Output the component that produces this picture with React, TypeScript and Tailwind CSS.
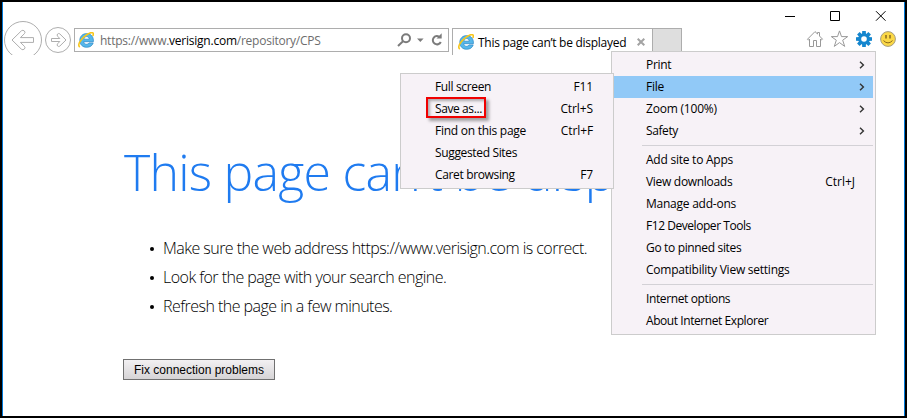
import React from "react";

const UI = "font-['Open_Sans','Noto_Sans',sans-serif]";

function IELogo({ className }: { className: string }) {
  return (
    <svg viewBox="0 0 16 16" className={className} fill="none">
      <path
        d="M8.6 1.6C4.6 1.6 1.8 4.4 1.8 8.4C1.8 12.5 4.6 15.3 8.7 15.3C12 15.3 14.4 13.7 15.2 10.9H11C10.6 11.8 9.8 12.3 8.7 12.3C7 12.3 5.9 11.3 5.8 9.7H15.4C15.8 4.8 13 1.6 8.6 1.6ZM5.9 7.2C6.1 5.6 7.1 4.6 8.6 4.6C10.2 4.6 11.1 5.6 11.2 7.2Z"
        fill="#56b7ea"
        stroke="#2a86c6"
        strokeWidth=".7"
      />
      <path
        d="M1.8 15.2C-.6 13.5 1.6 8.6 6 4.8C10.2 1 14.6 -.4 15.2 1.3C15.5 2.2 15.3 3 14.8 4"
        stroke="#f7c61c"
        strokeWidth="1.6"
      />
    </svg>
  );
}

function Chevron() {
  return (
    <svg viewBox="0 0 6 8" className="h-2 w-1.5" fill="none" stroke="#333" strokeWidth="1.4">
      <path d="M1 .8L4.4 4L1 7.2" />
    </svg>
  );
}

type Item = { label: string; keys?: string; sub?: boolean; active?: boolean; track?: string };

const mainGroups: Item[][] = [
  [
    { label: "Print", sub: true, track: "tracking-[-0.3px]" },
    { label: "File", sub: true, active: true },
    { label: "Zoom (100%)", sub: true, track: "tracking-[-0.2px]" },
    { label: "Safety", sub: true, track: "tracking-[-0.4px]" },
  ],
  [
    { label: "Add site to Apps" },
    { label: "View downloads", keys: "Ctrl+J", track: "tracking-[-0.3px]" },
    { label: "Manage add-ons" },
    { label: "F12 Developer Tools", track: "tracking-[-0.45px]" },
    { label: "Go to pinned sites", track: "tracking-[-0.34px]" },
    { label: "Compatibility View settings" },
  ],
  [
    { label: "Internet options", track: "tracking-[-0.38px]" },
    { label: "About Internet Explorer", track: "tracking-[-0.43px]" },
  ],
];

const fileItems: Item[] = [
  { label: "Full screen", keys: "F11", track: "tracking-[-0.35px]" },
  { label: "Save as...", keys: "Ctrl+S", track: "tracking-[-0.4px]" },
  { label: "Find on this page", keys: "Ctrl+F" },
  { label: "Suggested Sites", track: "tracking-[-0.35px]" },
  { label: "Caret browsing", keys: "F7", track: "tracking-[-0.35px]" },
];

function MainMenu() {
  return (
    <div className="absolute left-[611px] top-[51px] w-[265px] border border-[#cccccc] bg-[#f7f2f7] px-0.5 py-[2px] leading-[18px]">
      {mainGroups.map((group, g) => (
        <div key={g}>
          {g > 0 && <div className="my-[3px] ml-7 h-px bg-[#d3d1d6]" />}
          {group.map((it) => (
            <div
              key={it.label}
              className={`flex h-[22px] items-center pl-8 ${it.active ? "bg-[#91c9f7]" : ""}`}
            >
              <span className={`flex-1 ${it.track ?? "tracking-[-0.24px]"}`}>{it.label}</span>
              {it.keys && <span className="mr-[18px]">{it.keys}</span>}
              {it.sub && (
                <span className="mr-2">
                  <Chevron />
                </span>
              )}
            </div>
          ))}
        </div>
      ))}
    </div>
  );
}

function FileMenu() {
  return (
    <div className="absolute left-[400px] top-[73px] w-[214px] border border-[#cccccc] bg-[#f7f2f7] py-[2px] leading-[18px]">
      {fileItems.map((it) => (
        <div key={it.label} className="flex h-[22px] items-center justify-between pl-[34px] pr-5">
          <span className={it.track ?? "tracking-[-0.26px]"}>{it.label}</span>
          <span className="tracking-[-0.1px]">{it.keys}</span>
        </div>
      ))}
      <div className="absolute left-[25px] top-[23px] h-[21px] w-[60px] border-2 border-[#f00000] shadow-[3px_3px_3px_rgba(0,0,0,0.35),inset_2px_2px_3px_rgba(0,0,0,0.3)]" />
    </div>
  );
}

function NavButtons() {
  return (
    <svg viewBox="0 0 71 35" className="h-[35px] w-[71px] shrink-0" fill="none" stroke="#aeaeae">
      <circle cx="20" cy="20" r="18.5" />
      <path d="M9 20L18.4 10.8Q20 9.6 21.4 11Q22.6 12.4 21.4 13.7L17.4 17.6H30.5V22.4H17.4L21.4 26.3Q22.6 27.6 21.4 29Q20 30.4 18.4 29.2Z" />
      <circle cx="55" cy="20" r="12.5" />
      <path d="M63 20L56.8 13.9Q55.6 13 54.6 14Q53.6 15 54.6 16.2L56.8 18.5H48.5V21.5H56.8L54.6 23.8Q53.6 25 54.6 26Q55.6 27 56.8 26.1Z" />
    </svg>
  );
}

function AddressBar() {
  return (
    <div className="mt-2 flex h-6 w-[375px] shrink-0 items-center border border-[#adadad] pl-[3px] text-[12px] leading-[18px] text-[#6d6d6d]">
      <IELogo className="size-4 shrink-0" />
      <span className="ml-[6px] flex-1 whitespace-nowrap pt-0.5 tracking-[-0.24px]">
        https://www.<span className="text-black">verisign.com</span>/repository/CPS
      </span>
      <svg viewBox="0 0 46 16" className="mr-[5px] h-4 w-[46px]" fill="none" stroke="#7b7b7b" strokeWidth="2">
        <circle cx="9" cy="6.3" r="4" />
        <path d="M6 9.3L1 14" />
        <path d="M20 6.5H26.6L23.3 10Z" fill="#7b7b7b" stroke="none" />
        <path d="M43 5.2A4.2 4.2 0 1 0 43.8 10" />
        <path d="M39.5 6.4H44.7V1.2Z" fill="#7b7b7b" stroke="none" />
      </svg>
    </div>
  );
}

function Tab() {
  return (
    <div className="ml-[3px] mt-2 flex h-[27px] w-[200px] shrink-0 items-center border-l border-t border-[#adadad] pl-[5px] text-[12px] leading-[18px]">
      <IELogo className="size-4 shrink-0" />
      <span className="ml-1 flex-1 whitespace-nowrap pt-0.5 tracking-[-0.27px]">This page can’t be displayed</span>
      <svg viewBox="0 0 8 8" className="mr-[7px] size-2" stroke="#a3a3a3" strokeWidth="2">
        <path d="M.7 .7L7.3 7.3M7.3 .7L.7 7.3" />
      </svg>
    </div>
  );
}

function ToolIcons() {
  return (
    <svg viewBox="0 0 92 18" className="ml-auto mr-[6px] mt-[10px] h-[18px] w-[92px] shrink-0" fill="none" stroke="#999">
      <path d="M1.5 9.2L9 1.6L11.5 4V2.5H13.5V6L16.5 9.2L15.5 10L14.5 9V16.5H10.5V10.5H7.5V16.5H3.5V9L2.5 10.2Z" />
      <path d="M33.5 .9L35.5 6.6H41.7L36.7 10.2L38.7 16.4L33.5 12.6L28.3 16.4L30.3 10.2L25.3 6.6H31.5Z" />
      <g transform="translate(58 9)" stroke="none">
        <g fill="#1586ce">
          <circle r="5.8" />
          <path d="M-1.8 -8H1.8L2 -4H-2ZM-1.8 8H1.8L2 4H-2ZM-8 -1.8V1.8L-4 2V-2ZM8 -1.8V1.8L4 2V-2Z" />
          <path
            transform="rotate(45)"
            d="M-1.8 -8H1.8L2 -4H-2ZM-1.8 8H1.8L2 4H-2ZM-8 -1.8V1.8L-4 2V-2ZM8 -1.8V1.8L4 2V-2Z"
          />
        </g>
        <circle r="2.8" fill="#fff" />
      </g>
      <circle cx="82" cy="9" r="7.4" fill="#fbd846" stroke="#a59d82" />
      <path d="M80 5V8.5M84 5V8.5" stroke="#8b6a1c" strokeWidth="1.5" />
      <path d="M77.5 10.6Q82 15.2 86.5 10.6" stroke="#8b6a1c" />
    </svg>
  );
}

export default function App() {
  return (
    <div className={`relative h-[418px] w-[907px] overflow-hidden border-2 border-black bg-white ${UI} text-[12px] leading-4 text-black`}>
      <div className="flex h-full flex-col border-x border-[#0078d7]">
        <div className="flex h-[18px] shrink-0 justify-end">
          <svg viewBox="0 0 102 18" className="mr-[18px] h-[18px] w-[102px] overflow-visible" fill="none" stroke="#000">
            <path d="M1 14.5H11M46.5 9.5H55.5V18.5H46.5ZM92 9.2L101.5 18.7M101.5 9.2L92 18.7" />
          </svg>
        </div>
        <div className="flex h-[35px] shrink-0 items-start">
          <NavButtons />
          <AddressBar />
          <Tab />
          <div className="mt-2 h-[24px] w-[30px] shrink-0 border border-[#adadad] bg-[#dedede]" />
          <ToolIcons />
        </div>
        <div className="pl-[121px] pt-[82px]">
          <h1 className="whitespace-nowrap text-[50px] font-light leading-[70px] tracking-[-0.75px] text-[#1f7bf0]">
            This page can’t be displayed
          </h1>
          <ul className="-ml-px mt-[27px] text-[16px] font-light leading-[29px] tracking-[-0.53px]">
            {[
              "Make sure the web address https://www.verisign.com is correct.",
              "Look for the page with your search engine.",
              "Refresh the page in a few minutes.",
            ].map((t) => (
              <li key={t} className="flex items-center whitespace-nowrap">
                <span className="ml-[27px] mr-[9px] size-1 rounded-full bg-black" />
                {t}
              </li>
            ))}
          </ul>
          <button className="-ml-px mt-[38px] block h-[21px] w-[152px] border border-[#707070] bg-linear-to-b from-[#f2f0f2] to-[#d6d4d6] font-['Liberation_Sans',Arial,sans-serif] text-[12px] leading-[18px] text-black">
            Fix connection problems
          </button>
        </div>
      </div>
      <div className="absolute -left-0.5 -top-0.5">
        <MainMenu />
        <FileMenu />
      </div>
    </div>
  );
}
